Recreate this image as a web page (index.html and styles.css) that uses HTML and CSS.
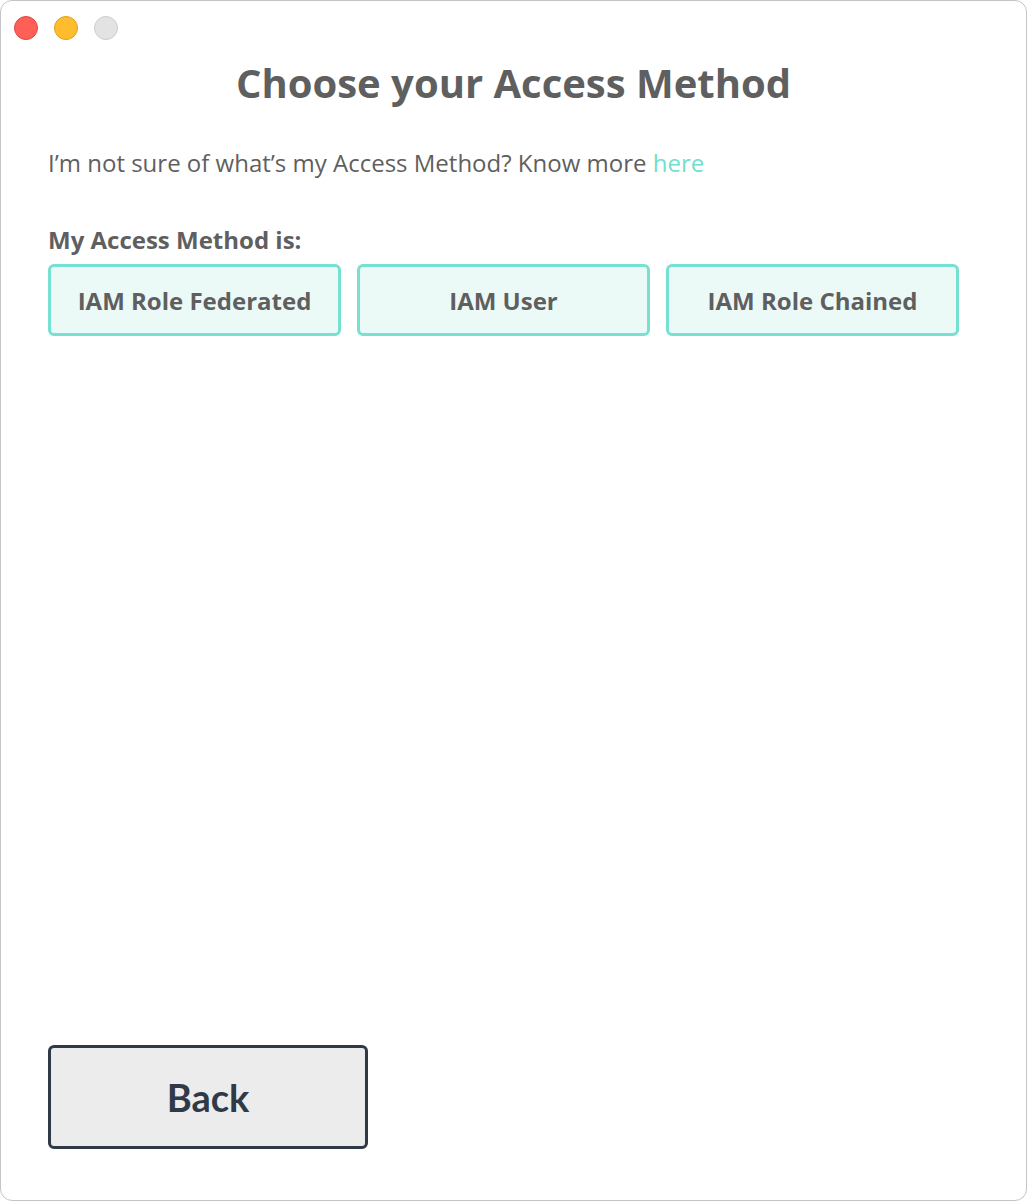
FILE: index.html
```html
<!DOCTYPE html>
<html>
<head>
<meta charset="utf-8">
<link rel="stylesheet" href="styles.css">
</head>
<body>
<div class="window">
  <div class="titlebar">
    <span class="light red"></span>
    <span class="light yellow"></span>
    <span class="light gray"></span>
  </div>
  <div class="content">
    <h1 class="title">Choose your Access Method</h1>
    <p class="help">I’m not sure of what’s my Access Method? Know more <a class="link" href="#">here</a></p>
    <div class="label">My Access Method is:</div>
    <div class="options">
      <button class="option">IAM Role Federated</button>
      <button class="option">IAM User</button>
      <button class="option">IAM Role Chained</button>
    </div>
    <div class="footer">
      <button class="back">Back</button>
    </div>
  </div>
</div>
</body>
</html>
```

FILE: styles.css
```css
html, body {
  margin: 0;
  padding: 0;
  background: #ffffff;
}
body {
  width: 1028px;
  height: 1202px;
  overflow: hidden;
}
.window {
  box-sizing: border-box;
  width: 1027px;
  height: 1201px;
  border: 1px solid #c4c4c4;
  border-radius: 12px;
  background: #ffffff;
  display: flex;
  flex-direction: column;
  font-family: "Open Sans", sans-serif;
  color: #5f5f5f;
}
.titlebar {
  display: flex;
  gap: 16px;
  padding: 15px 0 0 13px;
  height: 41px;
  box-sizing: content-box;
}
.light {
  width: 24px;
  height: 24px;
  border-radius: 50%;
  box-sizing: border-box;
}
.red { background: #fe5f57; border: 1px solid #e2463f; }
.yellow { background: #febc2e; border: 1px solid #e1a116; }
.gray { background: #e3e3e3; border: 1px solid #cdcdcd; }
.content {
  flex: 1;
  display: flex;
  flex-direction: column;
  padding: 0 47px 51px 47px;
}
.title {
  margin: 0;
  text-align: center;
  font-size: 40px;
  font-weight: 700;
  line-height: 52px;
  color: #5f5f5f;
}
.help {
  margin: 38px 0 0 0;
  font-size: 24px;
  line-height: 32px;
}
.link {
  color: #6fdfcc;
  text-decoration: none;
}
.label {
  margin-top: 45px;
  font-size: 24px;
  font-weight: 700;
  line-height: 32px;
}
.options {
  display: flex;
  gap: 16px;
  margin-top: 8px;
}
.option {
  width: 293px;
  height: 72px;
  border: 3px solid #76e0d1;
  border-radius: 6px;
  background: #ecfaf7;
  font-family: "Open Sans", sans-serif;
  font-size: 24px;
  font-weight: 700;
  color: #5f5f5f;
  padding: 0;
}
.footer {
  margin-top: auto;
}
.back {
  width: 320px;
  height: 104px;
  border: 3px solid #2f3a46;
  border-radius: 6px;
  background: #ececec;
  font-family: "Lato", sans-serif;
  font-size: 38px;
  font-weight: 700;
  color: #2f3a46;
  padding: 0;
}
```
